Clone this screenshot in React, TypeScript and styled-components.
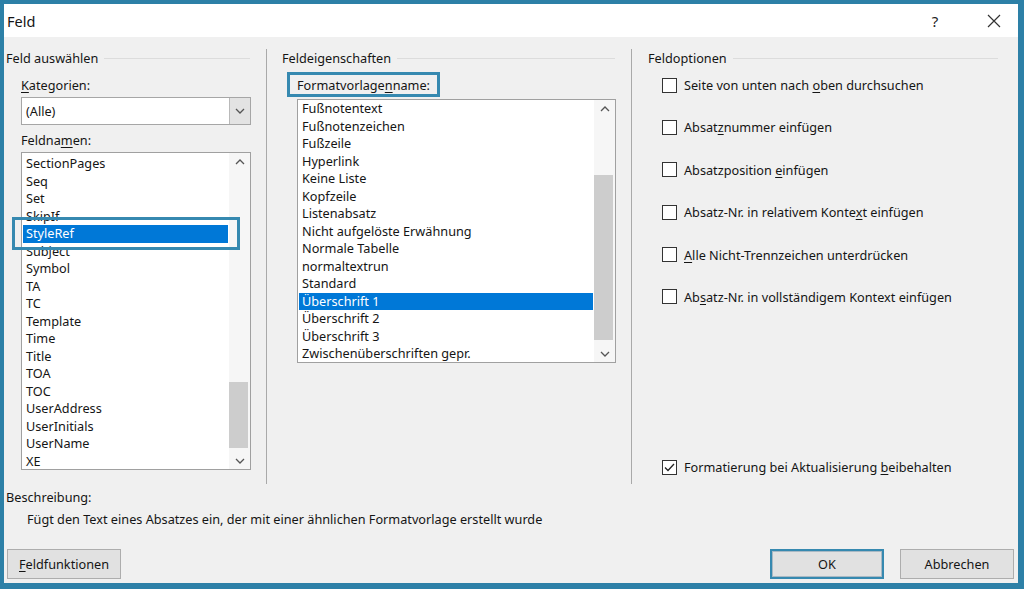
import React from 'react'
import styled, { createGlobalStyle } from 'styled-components'

const teal = '#2d80a7'
const accent = '#3689b0'

const GlobalStyle = createGlobalStyle`
	html, body {
		margin: 0;
		padding: 0;
	}
	body {
		background: ${teal};
		font-family: 'Noto Sans', 'Liberation Sans', sans-serif;
		font-size: 12.7px;
		color: #151515;
	}
`

const Window = styled.div`
	box-sizing: border-box;
	width: 1024px;
	height: 589px;
	border-style: solid;
	border-color: ${teal};
	border-width: 4px 6px 6px 4px;
	background: #f0f0f0;
	display: flex;
	flex-direction: column;
`

const TitleBar = styled.div`
	height: 33px;
	flex-shrink: 0;
	background: #fff;
	display: flex;
	align-items: center;
	padding-left: 3px;
`
const Title = styled.div`
	flex: 1;
	font-size: 14.5px;
`
const TitleButton = styled.div<{ $w: number }>`
	width: ${(p) => p.$w}px;
	height: 33px;
	display: flex;
	align-items: center;
	justify-content: center;
	font-size: 15px;
	color: #222;
`

const Body = styled.div`
	flex: 1;
	display: flex;
	flex-direction: column;
	padding: 12px 4px 4px 2px;
`

const Columns = styled.div`
	display: grid;
	grid-template-columns: 260px 365px 1fr;
	height: 435px;
`
const Column = styled.div<{ $divider?: boolean }>`
	display: flex;
	flex-direction: column;
	border-left: ${(p) => (p.$divider ? '1px solid #a9a9a9' : 'none')};
`
const GroupHeader = styled.div<{ $indent: number }>`
	display: flex;
	align-items: center;
	gap: 6px;
	height: 18px;
	padding-left: ${(p) => p.$indent}px;
	padding-right: 16px;
	&::after {
		content: '';
		flex: 1;
		height: 1px;
		background: #dcdcdc;
	}
`
const Stack = styled.div<{ $indent: number }>`
	display: flex;
	flex-direction: column;
	align-items: flex-start;
	padding-left: ${(p) => p.$indent}px;
	flex: 1;
`
const FieldLabel = styled.div<{ $top: number }>`
	height: 18px;
	line-height: 18px;
	margin-top: ${(p) => p.$top}px;
`
const BoxedLabel = styled.div`
	box-sizing: border-box;
	height: 25px;
	margin-top: 5px;
	margin-left: 20px;
	padding: 0 7px;
	border: 3px solid ${accent};
	display: flex;
	align-items: center;
`
const Key = styled.span`
	text-decoration: underline;
	text-underline-offset: 2px;
`

const Combo = styled.div`
	box-sizing: border-box;
	width: 230px;
	height: 28px;
	margin-top: 3px;
	border: 1px solid #a6a6a6;
	background: #fff;
	display: flex;
`
const ComboText = styled.div`
	flex: 1;
	display: flex;
	align-items: center;
	padding-left: 4px;
`
const ComboButton = styled.div`
	width: 20px;
	background: #e3e3e3;
	border-left: 1px solid #b9b9b9;
	display: flex;
	align-items: center;
	justify-content: center;
`

const ListFrame = styled.div<{ $w: number; $h: number; $top: number; $left?: number }>`
	position: relative;
	box-sizing: border-box;
	width: ${(p) => p.$w}px;
	height: ${(p) => p.$h}px;
	margin-top: ${(p) => p.$top}px;
	margin-left: ${(p) => p.$left ?? 0}px;
	border: 1px solid #a0a0a0;
	background: #fff;
	display: flex;
`
const Items = styled.div<{ $pad: number }>`
	flex: 1;
	padding-top: ${(p) => p.$pad}px;
	overflow: hidden;
`
const Item = styled.div<{ $sel?: boolean }>`
	height: 17.5px;
	line-height: 17.5px;
	margin: 0 1px;
	padding-left: 3px;
	white-space: nowrap;
	background: ${(p) => (p.$sel ? '#0078d7' : 'transparent')};
	color: ${(p) => (p.$sel ? '#fff' : 'inherit')};
`
const ScrollBar = styled.div`
	width: 21px;
	display: flex;
	flex-direction: column;
	background: #f6f6f6;
`
const ScrollArrow = styled.div`
	height: 17px;
	display: flex;
	align-items: center;
	justify-content: center;
`
const Track = styled.div<{ $offset: number }>`
	flex: 1;
	padding-top: ${(p) => p.$offset}px;
`
const Thumb = styled.div<{ $h: number }>`
	height: ${(p) => p.$h}px;
	margin: 0 2px 0 0;
	background: #cdcdcd;
`
const FocusMark = styled.div<{ $x: number; $y: number; $w: number; $h: number }>`
	position: absolute;
	left: ${(p) => p.$x}px;
	top: ${(p) => p.$y}px;
	width: ${(p) => p.$w}px;
	height: ${(p) => p.$h}px;
	box-sizing: border-box;
	border: 3px solid ${accent};
	pointer-events: none;
`

const CheckRow = styled.label<{ $top?: number; $bottom?: boolean }>`
	display: flex;
	align-items: center;
	gap: 7px;
	height: 18px;
	margin-left: 30px;
	margin-top: ${(p) => (p.$bottom ? 'auto' : `${p.$top}px`)};
	margin-bottom: ${(p) => (p.$bottom ? '8px' : '0')};
`
const Box = styled.span`
	box-sizing: border-box;
	width: 15px;
	height: 15px;
	border: 1px solid #333;
	background: #fff;
	display: flex;
	align-items: center;
	justify-content: center;
`

const Description = styled.div`
	margin-top: 4px;
	height: 18px;
	line-height: 18px;
`
const DescriptionText = styled.div`
	margin-top: 4px;
	padding-left: 21px;
	height: 18px;
	line-height: 18px;
`

const Footer = styled.div`
	margin-top: auto;
	display: flex;
	align-items: center;
	justify-content: space-between;
	padding-left: 1px;
`
const ButtonGroup = styled.div`
	display: flex;
	gap: 16px;
`
const Button = styled.button<{ $default?: boolean }>`
	box-sizing: border-box;
	width: 114px;
	height: 30px;
	font: inherit;
	color: inherit;
	background: #e1e1e1;
	border: ${(p) => (p.$default ? `2px solid ${accent}` : '1px solid #adadad')};
	box-shadow: ${(p) => (p.$default ? 'inset 0 0 0 1px #a9b9c4' : 'none')};
	padding: 0;
`

const Chevron = ({ up }: { up?: boolean }) => (
	<svg width="10" height="6" viewBox="0 0 10 6">
		<path
			d={up ? 'M1 5 L5 1 L9 5' : 'M1 1 L5 5 L9 1'}
			fill="none"
			stroke="#555"
			strokeWidth="1.3"
		/>
	</svg>
)

interface ListProps {
	items: string[]
	selected: number
	width: number
	height: number
	top: number
	left?: number
	pad: number
	thumbOffset: number
	thumbHeight: number
	children?: React.ReactNode
}

const ListBox = ({ items, selected, width, height, top, left, pad, thumbOffset, thumbHeight, children }: ListProps) => (
	<ListFrame $w={width} $h={height} $top={top} $left={left}>
		<Items $pad={pad}>
			{items.map((it, i) => (
				<Item key={it} $sel={i === selected}>
					{it}
				</Item>
			))}
		</Items>
		<ScrollBar>
			<ScrollArrow>
				<Chevron up />
			</ScrollArrow>
			<Track $offset={thumbOffset}>
				<Thumb $h={thumbHeight} />
			</Track>
			<ScrollArrow>
				<Chevron />
			</ScrollArrow>
		</ScrollBar>
		{children}
	</ListFrame>
)

const fieldNames = [
	'SectionPages',
	'Seq',
	'Set',
	'SkipIf',
	'StyleRef',
	'Subject',
	'Symbol',
	'TA',
	'TC',
	'Template',
	'Time',
	'Title',
	'TOA',
	'TOC',
	'UserAddress',
	'UserInitials',
	'UserName',
	'XE',
]

const styleNames = [
	'Fußnotentext',
	'Fußnotenzeichen',
	'Fußzeile',
	'Hyperlink',
	'Keine Liste',
	'Kopfzeile',
	'Listenabsatz',
	'Nicht aufgelöste Erwähnung',
	'Normale Tabelle',
	'normaltextrun',
	'Standard',
	'Überschrift 1',
	'Überschrift 2',
	'Überschrift 3',
	'Zwischenüberschriften gepr.',
]

const options: React.ReactNode[] = [
	<>
		Seite von unten nach <Key>o</Key>ben durchsuchen
	</>,
	<>
		Absat<Key>z</Key>nummer einfügen
	</>,
	<>
		Absatzposition <Key>e</Key>infügen
	</>,
	<>
		Absatz-Nr. in relativem Konte<Key>x</Key>t einfügen
	</>,
	<>
		<Key>A</Key>lle Nicht-Trennzeichen unterdrücken
	</>,
	<>
		Ab<Key>s</Key>atz-Nr. in vollständigem Kontext einfügen
	</>,
]

export default function App() {
	return (
		<>
			<GlobalStyle />
			<Window>
				<TitleBar>
					<Title>Feld</Title>
					<TitleButton $w={70}>?</TitleButton>
					<TitleButton $w={48}>
						<svg width="14" height="14" viewBox="0 0 14 14">
							<path d="M1 1 L13 13 M13 1 L1 13" stroke="#333" strokeWidth="1.2" />
						</svg>
					</TitleButton>
				</TitleBar>
				<Body>
					<Columns>
						<Column>
							<GroupHeader $indent={0}>Feld auswählen</GroupHeader>
							<Stack $indent={15}>
								<FieldLabel $top={9}>
									<Key>K</Key>ategorien:
								</FieldLabel>
								<Combo>
									<ComboText>(Alle)</ComboText>
									<ComboButton>
										<Chevron />
									</ComboButton>
								</Combo>
								<FieldLabel $top={6}>
									Feldna<Key>m</Key>en:
								</FieldLabel>
								<ListBox
									items={fieldNames}
									selected={4}
									width={230}
									height={318}
									top={3}
									pad={2}
									thumbOffset={212}
									thumbHeight={66}
								>
									<FocusMark $x={-10} $y={64} $w={228} $h={33} />
								</ListBox>
							</Stack>
						</Column>
						<Column $divider>
							<GroupHeader $indent={15}>Feldeigenschaften</GroupHeader>
							<Stack $indent={0}>
								<BoxedLabel>
									<span>
										Formatvorlage<Key>n</Key>name:
									</span>
								</BoxedLabel>
								<ListBox
									items={styleNames}
									selected={11}
									width={319}
									height={264}
									top={2}
									left={30}
									pad={0}
									thumbOffset={58}
									thumbHeight={165}
								/>
							</Stack>
						</Column>
						<Column $divider>
							<GroupHeader $indent={16}>Feldoptionen</GroupHeader>
							{options.map((o, i) => (
								<CheckRow key={i} $top={i === 0 ? 9 : 24.4}>
									<Box />
									<span>{o}</span>
								</CheckRow>
							))}
							<CheckRow $bottom>
								<Box>
									<svg width="11" height="9" viewBox="0 0 11 9">
										<path d="M1 4.5 L4 7.5 L10 1" fill="none" stroke="#222" strokeWidth="1.3" />
									</svg>
								</Box>
								<span>
									Formatierung bei Aktualisierung <Key>b</Key>eibehalten
								</span>
							</CheckRow>
						</Column>
					</Columns>
					<Description>Beschreibung:</Description>
					<DescriptionText>
						Fügt den Text eines Absatzes ein, der mit einer ähnlichen Formatvorlage erstellt wurde
					</DescriptionText>
					<Footer>
						<Button>
							<Key>F</Key>eldfunktionen
						</Button>
						<ButtonGroup>
							<Button $default>OK</Button>
							<Button>Abbrechen</Button>
						</ButtonGroup>
					</Footer>
				</Body>
			</Window>
		</>
	)
}
